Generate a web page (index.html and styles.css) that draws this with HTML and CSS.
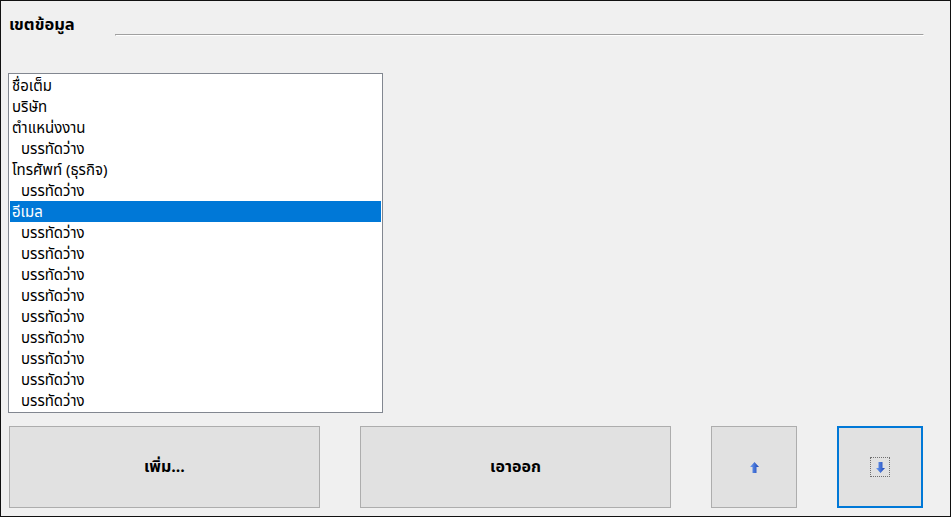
FILE: index.html
```html
<!DOCTYPE html>
<html lang="th">
<head>
<meta charset="utf-8">
<title>เขตข้อมูล</title>
<link rel="stylesheet" href="styles.css">
</head>
<body>
<div class="window">
  <div class="header">
    <div class="label">เขตข้อมูล</div>
    <div class="separator"></div>
  </div>
  <div class="list">
    <div class="item">ชื่อเต็ม</div>
    <div class="item">บริษัท</div>
    <div class="item">ตำแหน่งงาน</div>
    <div class="item sub">บรรทัดว่าง</div>
    <div class="item">โทรศัพท์ (ธุรกิจ)</div>
    <div class="item sub">บรรทัดว่าง</div>
    <div class="item selected">อีเมล</div>
    <div class="item sub">บรรทัดว่าง</div>
    <div class="item sub">บรรทัดว่าง</div>
    <div class="item sub">บรรทัดว่าง</div>
    <div class="item sub">บรรทัดว่าง</div>
    <div class="item sub">บรรทัดว่าง</div>
    <div class="item sub">บรรทัดว่าง</div>
    <div class="item sub">บรรทัดว่าง</div>
    <div class="item sub">บรรทัดว่าง</div>
    <div class="item sub">บรรทัดว่าง</div>
  </div>
  <div class="buttons">
    <button class="btn wide">เพิ่ม...</button>
    <button class="btn wide">เอาออก</button>
    <button class="btn square">
      <svg width="9" height="11" viewBox="0 0 9 11">
        <defs>
          <linearGradient id="gu" x1="0" y1="0" x2="1" y2="0">
            <stop offset="0" stop-color="#6f9ff2"/>
            <stop offset="1" stop-color="#1a45b8"/>
          </linearGradient>
        </defs>
        <path d="M4.5 0 L9 5 L6.5 5 L6.5 11 L2.5 11 L2.5 5 L0 5 Z" fill="url(#gu)"/>
      </svg>
    </button>
    <button class="btn square focused">
      <span class="focus-rect">
        <svg width="9" height="11" viewBox="0 0 9 11">
          <defs>
            <linearGradient id="gd" x1="0" y1="0" x2="1" y2="0">
              <stop offset="0" stop-color="#6f9ff2"/>
              <stop offset="1" stop-color="#1a45b8"/>
            </linearGradient>
          </defs>
          <path d="M2.5 0 L6.5 0 L6.5 6 L9 6 L4.5 11 L0 6 L2.5 6 Z" fill="url(#gd)"/>
        </svg>
      </span>
    </button>
  </div>
</div>
</body>
</html>
```
FILE: styles.css
```css
* { box-sizing: border-box; }
html, body { margin: 0; padding: 0; }
body {
  font-family: Tahoma, "Leelawadee UI", "Noto Sans Thai", "Noto Sans", sans-serif;
  font-size: 15px;
  color: #000;
  background: #f0f0f0;
}
.window {
  width: 951px;
  height: 517px;
  border: 1px solid #111;
  background: #f0f0f0;
  display: flex;
  flex-direction: column;
}
.header {
  display: flex;
  align-items: flex-start;
  height: 72px;
  padding: 13px 0 0 8px;
}
.label {
  width: 106px;
  font-size: 16.5px;
  font-weight: bold;
  line-height: 22px;
}
.separator {
  flex: 1;
  margin: 20px 26px 0 0;
  height: 2px;
  border-top: 1px solid #a0a0a0;
  border-left: 1px solid #a0a0a0;
  border-bottom: 1px solid #fff;
  border-right: 1px solid #fff;
}
.list {
  margin-left: 7px;
  width: 375px;
  height: 340px;
  border: 1px solid #828790;
  background: #fff;
  padding: 1px;
  overflow: hidden;
}
.item {
  height: 21px;
  line-height: 23px;
  padding-left: 2px;
  white-space: nowrap;
}
.item.sub { padding-left: 11px; }
.item.selected {
  background: #0078d7;
  color: #fff;
}
.buttons {
  display: flex;
  gap: 40px;
  padding: 13px 0 0 8px;
}
.btn {
  height: 82px;
  background: #e1e1e1;
  border: 1px solid #adadad;
  font-family: inherit;
  font-size: 16px;
  font-weight: bold;
  color: #000;
  display: flex;
  align-items: center;
  justify-content: center;
  padding: 0;
  margin: 0;
}
.btn.wide { width: 311px; }
.btn.square { width: 86px; }
.btn.focused { border: 2px solid #0078d7; }
.focus-rect {
  width: 20px;
  height: 20px;
  border: 1px dotted #707070;
  display: flex;
  align-items: center;
  justify-content: center;
}
svg { display: block; }
```
